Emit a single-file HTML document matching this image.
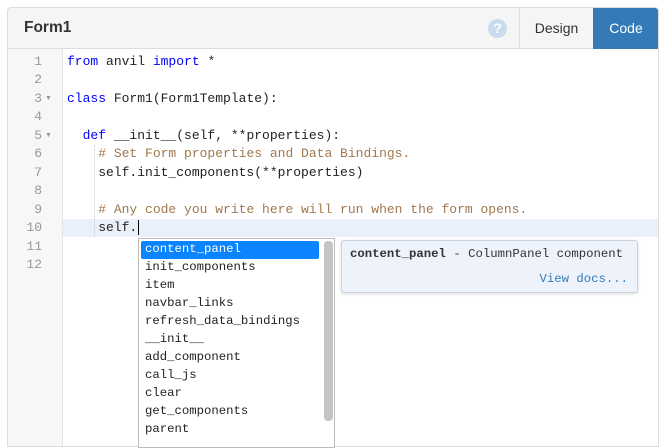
<!DOCTYPE html>
<html><head><meta charset="utf-8"><style>
*{margin:0;padding:0;box-sizing:border-box}
body{width:667px;height:442px;background:#fff;overflow:hidden;position:relative;font-family:"Liberation Sans",sans-serif}
.panel{position:absolute;left:7px;top:7px;width:652px;height:440px;border:1px solid #ddd;border-radius:4px 4px 0 0;background:#fff;overflow:hidden}
.hdr{position:absolute;left:0;top:0;width:100%;height:41px;background:#f5f5f5;border-bottom:1px solid #ddd}
.title{position:absolute;left:16px;top:11px;font-size:15.5px;font-weight:bold;color:#333}
.help{position:absolute;left:480px;top:11px;width:19px;height:19px;border-radius:50%;background:#c9dbee;color:#fff;font-size:14px;font-weight:bold;text-align:center;line-height:19px}
.tab{position:absolute;top:0;height:41px;line-height:41px;text-align:center;font-size:14px}
.design{left:511px;width:74px;border-left:1px solid #ddd;color:#333}
.code{left:585px;width:66px;background:#337ab7;color:#fff}
.gut{position:absolute;left:0;top:41px;width:55px;height:400px;background:#f7f7f7;border-right:1px solid #e6e6e6}
.hl{position:absolute;left:55px;top:211px;width:600px;height:18px;background:#e9f0fa}
.ln{position:absolute;left:0;width:42px;text-align:right;font:13px "Liberation Mono",monospace;color:#999}
.fold{position:absolute;left:45px;font-size:7px;color:#999}
.cl{position:absolute;left:60px;font:13px "Liberation Mono",monospace;color:#222;white-space:pre}
.k{color:#0000ff}.c{color:#a0784f}
.guide{position:absolute;border-left:1px dotted #c8c8d8}
.ac{position:absolute;left:138px;top:238px;width:197px;height:210px;border:1px solid #bbb;background:#fff}
.it{position:absolute;left:6px;font:12.3px "Liberation Mono",monospace;color:#222}
.sel{position:absolute;left:2px;top:2px;width:178px;height:18px;background:#0a84ff;border-radius:2px}
.sb{position:absolute;left:185px;top:2px;width:9px;height:180px;background:#c4c4c4;border-radius:4px}
.tip{position:absolute;left:341px;top:240px;width:297px;height:53px;background:#eef3fb;border:1px solid #c9d3e0;border-radius:3px;box-shadow:0 1px 3px rgba(0,0,0,.15);font:12.3px "Liberation Mono",monospace;color:#333}
</style></head><body>
<div class="panel">
<div class="hdr"><div class="title">Form1</div><div class="help">?</div><div class="tab design">Design</div><div class="tab code">Code</div></div>
<div class="gut"></div>
<div class="hl"></div>
<div class="guide" style="left:86px;top:137px;height:92px"></div>
</div>
<div class="ln" style="top:54px">1</div>
<div class="ln" style="top:72px">2</div>
<div class="ln" style="top:91px">3</div><div class="fold" style="top:95px">▼</div>
<div class="ln" style="top:109px">4</div>
<div class="ln" style="top:128px">5</div><div class="fold" style="top:132px">▼</div>
<div class="ln" style="top:146px">6</div>
<div class="ln" style="top:165px">7</div>
<div class="ln" style="top:183px">8</div>
<div class="ln" style="top:202px">9</div>
<div class="ln" style="top:220px">10</div>
<div class="ln" style="top:239px">11</div>
<div class="ln" style="top:257px">12</div>
<div class="cl" style="left:67px;top:54px"><span class="k">from</span> anvil <span class="k">import</span> *</div>
<div class="cl" style="left:67px;top:91px"><span class="k">class</span> Form1(Form1Template):</div>
<div class="cl" style="left:67px;top:128px">  <span class="k">def</span> __init__(self, **properties):</div>
<div class="cl" style="left:67px;top:146px">    <span class="c"># Set Form properties and Data Bindings.</span></div>
<div class="cl" style="left:67px;top:165px">    self.init_components(**properties)</div>
<div class="cl" style="left:67px;top:202px">    <span class="c"># Any code you write here will run when the form opens.</span></div>
<div class="cl" style="left:67px;top:220px">    self.<span style="border-left:1px solid #000;margin-left:1px"></span></div>
<div class="ac">
<div class="sel"></div><div class="sb"></div>
<div class="it" style="top:3px;color:#fff">content_panel</div>
<div class="it" style="top:21px">init_components</div>
<div class="it" style="top:39px">item</div>
<div class="it" style="top:57px">navbar_links</div>
<div class="it" style="top:75px">refresh_data_bindings</div>
<div class="it" style="top:93px">__init__</div>
<div class="it" style="top:111px">add_component</div>
<div class="it" style="top:129px">call_js</div>
<div class="it" style="top:147px">clear</div>
<div class="it" style="top:165px">get_components</div>
<div class="it" style="top:183px">parent</div>
</div>
<div class="tip">
<div style="position:absolute;left:8px;top:6px"><b>content_panel</b> - ColumnPanel component</div>
<div style="position:absolute;right:9px;top:31px;color:#337ab7">View docs...</div>
</div>
</body></html>
